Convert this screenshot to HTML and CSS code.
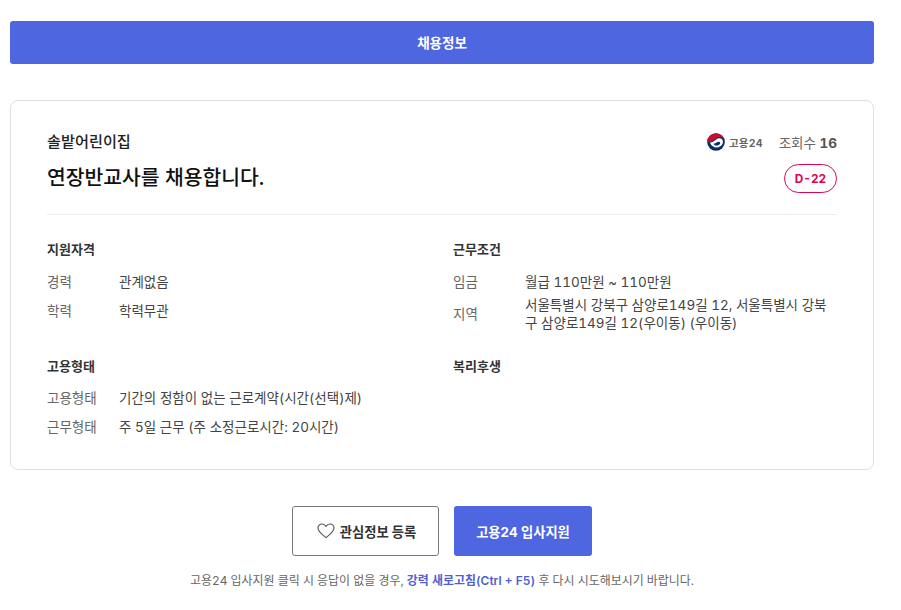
FILE: index.html
```html
<!DOCTYPE html>
<html lang="ko">
<head>
<meta charset="utf-8">
<title>채용정보</title>
<link rel="stylesheet" href="styles.css">
</head>
<body>
<main class="page">
  <div class="banner"><span class="banner-text">채용정보</span></div>
  <section class="card">
    <header class="head">
      <div class="head-left">
        <div class="company">솔밭어린이집</div>
        <h1 class="title">연장반교사를 채용합니다.</h1>
      </div>
      <div class="head-right">
        <div class="meta">
          <span class="logo">
            <svg class="logo-mark" width="18" height="18" viewBox="0 0 18 18" aria-hidden="true">
              <circle cx="9" cy="9" r="8.8" fill="#0b2d6b"/>
              <path d="M0.2 9A8.8 8.8 0 0 1 17.8 9C17.8 6.8 16.4 4.2 13.4 3.9C10.8 3.7 9.6 5.2 8 6.4C6 7.8 2 9.6 0.2 9Z" fill="#c8102e"/>
              <path d="M3 9.6C5.4 9.4 7.6 7.8 9.2 6.4C10.8 5.1 12.8 4.8 14.4 5.8C16.2 7 16.4 9.6 15.2 11.6C13.8 13.8 10.6 15 7.8 14.2C5.4 13.6 3.6 11.8 3 9.6Z" fill="#fff"/>
              <path d="M6.4 10.8C8.2 10.4 9.6 9.2 11 8.9C12.4 8.6 13.4 9.4 13.2 10.4C12.6 11.9 10.4 12.8 8.8 12.4C7.6 12.2 6.8 11.6 6.4 10.8Z" fill="#0b2d6b"/>
            </svg>
            <span class="logo-text">고용24</span>
          </span>
          <span class="views">조회수 <b>16</b></span>
        </div>
        <span class="dday">D-22</span>
      </div>
    </header>
    <div class="info">
      <section class="group">
        <h2 class="group-title">지원자격</h2>
        <div class="row"><span class="label">경력</span><span class="value">관계없음</span></div>
        <div class="row"><span class="label">학력</span><span class="value">학력무관</span></div>
      </section>
      <section class="group">
        <h2 class="group-title">근무조건</h2>
        <div class="row"><span class="label">임금</span><span class="value">월급 110만원 ~ 110만원</span></div>
        <div class="row"><span class="label">지역</span><span class="value">서울특별시 강북구 삼양로149길 12, 서울특별시 강북구 삼양로149길 12(우이동) (우이동)</span></div>
      </section>
      <section class="group group-lower">
        <h2 class="group-title">고용형태</h2>
        <div class="row"><span class="label">고용형태</span><span class="value">기간의 정함이 없는 근로계약(시간(선택)제)</span></div>
        <div class="row"><span class="label">근무형태</span><span class="value">주 5일 근무 (주 소정근로시간: 20시간)</span></div>
      </section>
      <section class="group group-lower">
        <h2 class="group-title">복리후생</h2>
      </section>
    </div>
  </section>
  <div class="actions">
    <button class="btn btn-line" type="button">
      <svg width="18" height="16" viewBox="0 0 19 17" fill="none" aria-hidden="true">
        <path d="M9.5 15.6C7 13.4 1 9.6 1 5.4C1 2.9 2.9 1 5.2 1C7 1 8.6 2 9.5 3.7C10.4 2 12 1 13.8 1C16.1 1 18 2.9 18 5.4C18 9.6 12 13.4 9.5 15.6Z" stroke="#555" stroke-width="1.2" stroke-linejoin="round"/>
      </svg>
      관심정보 등록
    </button>
    <button class="btn btn-fill" type="button">고용24 입사지원</button>
  </div>
  <p class="note">고용24 입사지원 클릭 시 응답이 없을 경우, <strong>강력 새로고침(Ctrl + F5)</strong> 후 다시 시도해보시기 바랍니다.</p>
</main>
</body>
</html>
```
FILE: styles.css
```css
* { box-sizing: border-box; }
html, body { margin: 0; padding: 0; background: #fff; }
body {
  font-family: Inter, "Noto Sans CJK KR", sans-serif;
  font-feature-settings: "tnum";
  color: #333;
  font-size: 13.5px;
}
.page { width: 874px; padding: 21px 0 0 10px; }
.banner {
  height: 43px;
  padding-bottom: 1px;
  display: flex;
  align-items: center;
  justify-content: center;
  background: #4f66e1;
  color: #fff;
  font-size: 13.5px;
  font-weight: 700;
  border-radius: 3px;
}
.card {
  margin-top: 36px;
  height: 370px;
  padding: 26px 36px 0;
  border: 1px solid #e0e0e0;
  border-radius: 8px;
}
.head {
  display: flex;
  justify-content: space-between;
  height: 88px;
  border-bottom: 1px solid #eee;
}
.company { font-size: 15.2px; font-weight: 500; line-height: 30px; color: #222; }
.title { margin: 6px 0 0; font-size: 20.4px; font-weight: 500; line-height: 30px; color: #111; }
.head-right { display: flex; flex-direction: column; align-items: flex-end; }
.meta { display: flex; align-items: center; gap: 16px; height: 30px; }
.logo { display: flex; align-items: center; gap: 4px; }
.logo-text { font-size: 10.5px; font-weight: 700; color: #666; letter-spacing: 0.2px; }
.views { font-size: 13.5px; color: #666; }
.views b { font-weight: 700; color: #555; }
.dday {
  margin-top: 7px;
  width: 53px;
  height: 29px;
  display: flex;
  align-items: center;
  justify-content: center;
  border: 1px solid #e5004f;
  border-radius: 15px;
  color: #e5004f;
  font-size: 11.8px;
  font-weight: 700;
}
.info {
  display: grid;
  grid-template-columns: 406px 1fr;
  grid-template-rows: 117px auto;
  padding-top: 20px;
}
.group-title { margin: 0 0 4px; font-size: 13px; font-weight: 700; line-height: 28px; color: #333; }
.group-lower .group-title { margin-bottom: 3px; }
.row { display: flex; align-items: center; min-height: 29px; line-height: 18px; }
.label { flex: 0 0 72px; color: #666; }
.value { color: #444; }
.actions {
  margin-top: 36px;
  display: flex;
  justify-content: center;
  gap: 15px;
}
.btn {
  height: 50px;
  display: flex;
  align-items: center;
  justify-content: center;
  gap: 5px;
  font-family: inherit;
  font-size: 13.3px;
  font-weight: 700;
  border-radius: 3px;
  padding: 0;
}
.btn-line { width: 147px; padding-left: 2px; background: #fff; border: 1px solid #777; color: #333; }
.btn-fill { width: 138px; background: #4f66e1; border: 0; color: #fff; }
.note { margin: 16px 0 0; text-align: center; font-size: 11.95px; color: #666; line-height: 18px; }
.note strong { font-weight: 600; color: #4f5fd5; }
```
